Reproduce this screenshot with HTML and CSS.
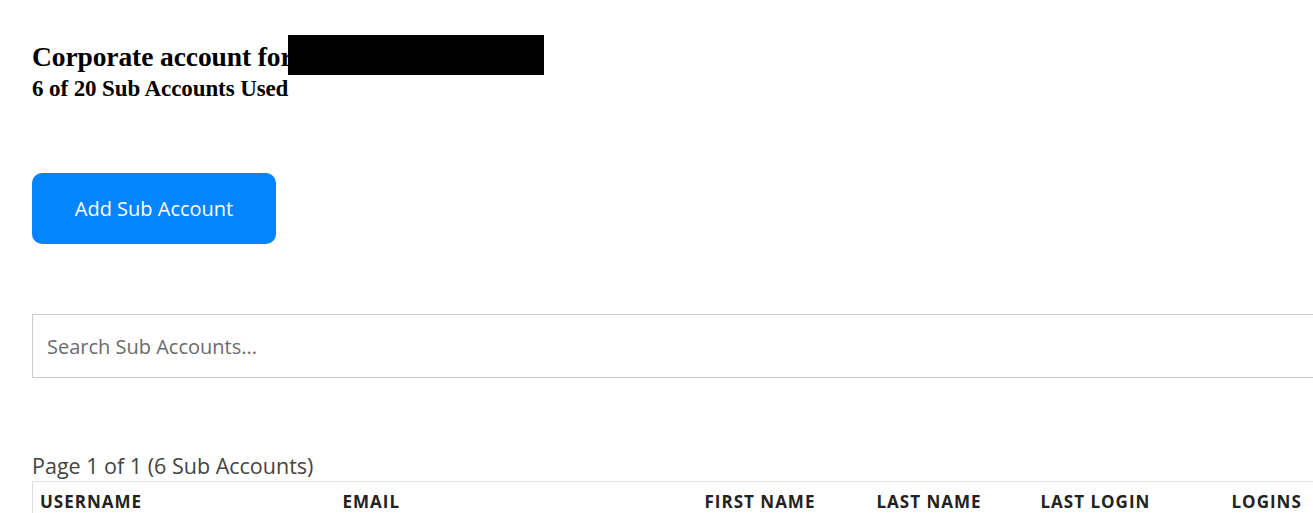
FILE: index.html
```html
<!DOCTYPE html>
<html lang="en">
<head>
    <meta charset="UTF-8">
    <title>Corporate Account</title>
    <link rel="stylesheet" href="styles.css">
</head>
<body>
    <div class="page">
        <div class="account-head">
            <h1>Corporate account for <span class="redacted"></span></h1>
            <h2>6 of 20 Sub Accounts Used</h2>
        </div>

        <button class="add-btn">Add Sub Account</button>

        <input class="search" type="text" placeholder="Search Sub Accounts...">

        <div class="page-info">Page 1 of 1 (6 Sub Accounts)</div>
        <table class="accounts">
            <thead>
                <tr>
                    <th class="col-user">Username</th>
                    <th class="col-email">Email</th>
                    <th class="col-first">First Name</th>
                    <th class="col-last">Last Name</th>
                    <th class="col-login">Last Login</th>
                    <th class="col-count">Logins</th>
                </tr>
            </thead>
        </table>
    </div>
</body>
</html>
```

FILE: styles.css
```css
* {
    margin: 0;
    padding: 0;
    box-sizing: border-box;
}

body {
    background-color: white;
    font-family: "Open Sans", Arial, sans-serif;
    color: #333;
    overflow: hidden;
}

.page {
    padding: 40px 0 0 32px;
    display: flex;
    flex-direction: column;
    align-items: flex-start;
}

.account-head h1 {
    font-family: "Liberation Serif", serif;
    font-weight: bold;
    font-size: 27.5px;
    line-height: 34px;
    color: #000;
    letter-spacing: -0.1px;
    display: flex;
    align-items: flex-start;
}

.redacted {
    display: inline-block;
    width: 256px;
    height: 40px;
    background-color: #000;
    margin-left: -5px;
    margin-top: -5px;
    margin-bottom: -10px;
}

.account-head h2 {
    font-family: "Liberation Serif", serif;
    font-weight: bold;
    font-size: 23px;
    line-height: 26px;
    margin-top: 2px;
    color: #000;
    letter-spacing: -0.1px;
}

.add-btn {
    margin-top: 71px;
    width: 244px;
    height: 71px;
    border: none;
    border-radius: 10px;
    background-color: #0584ff;
    color: white;
    font-family: "Open Sans", Arial, sans-serif;
    font-size: 20px;
    cursor: pointer;
}

.search {
    margin-top: 70px;
    width: calc(100vw + 20px);
    height: 64px;
    border: 1px solid #ccc;
    padding: 0 14px;
    font-family: "Open Sans", Arial, sans-serif;
    font-size: 20px;
    color: #333;
    outline: none;
}

.search::placeholder {
    color: #6b6b6b;
}

.page-info {
    margin-top: 74px;
    font-size: 21.5px;
    line-height: 28px;
    color: #444;
}

.accounts {
    width: calc(100vw + 20px);
    border-collapse: collapse;
    border-top: 1px solid #ddd;
    border-left: 1px solid #ddd;
    margin-top: 1px;
}

.accounts th {
    text-align: left;
    font-size: 17px;
    font-weight: bold;
    text-transform: uppercase;
    letter-spacing: 1px;
    color: #222;
    padding: 8px 0 8px 7px;
}

.col-user { width: 303px; }
.col-email { width: 362px; }
.col-first { width: 172px; }
.col-last { width: 164px; }
.col-login { width: 191px; }
```
